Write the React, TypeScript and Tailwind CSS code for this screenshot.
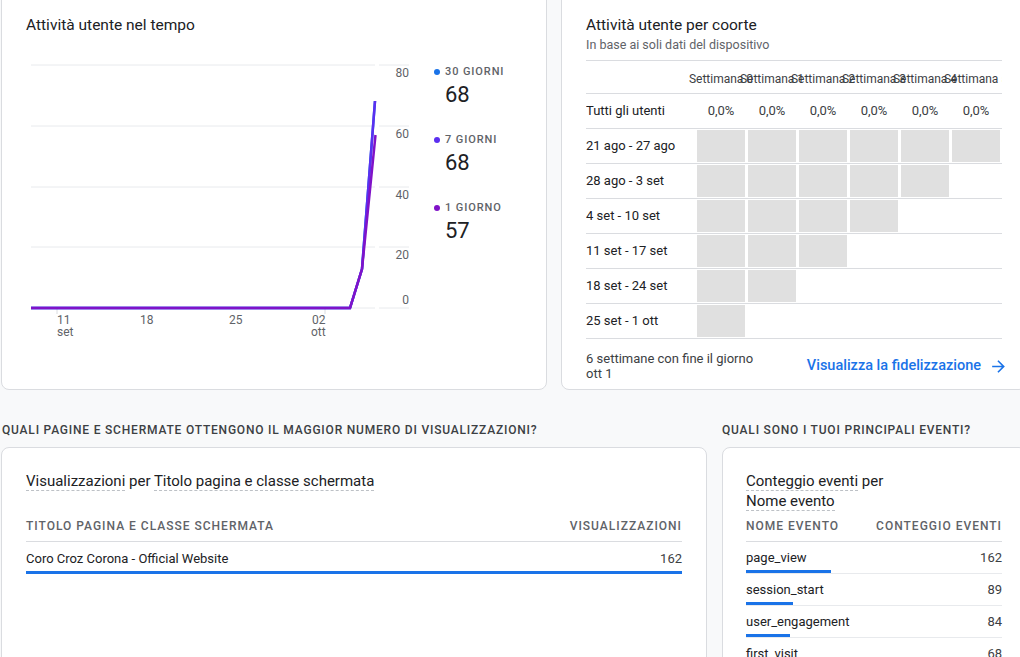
const cohortRows = [
  { label: "21 ago - 27 ago", cells: 6 },
  { label: "28 ago - 3 set", cells: 5 },
  { label: "4 set - 10 set", cells: 4 },
  { label: "11 set - 17 set", cells: 3 },
  { label: "18 set - 24 set", cells: 2 },
  { label: "25 set - 1 ott", cells: 1 },
]

const legend = [
  { label: "30 GIORNI", value: "68", color: "bg-[#1a73e8]" },
  { label: "7 GIORNI", value: "68", color: "bg-[#5b2ff0]" },
  { label: "1 GIORNO", value: "57", color: "bg-[#8012c8]" },
]

const events = [
  { name: "page_view", count: 162 },
  { name: "session_start", count: 89 },
  { name: "user_engagement", count: 84 },
  { name: "first_visit", count: 68 },
]

function ActivityChart() {
  const grid = [10, 71, 132, 192, 253]
  const yLabels = [
    { t: "80", y: 22 },
    { t: "60", y: 83 },
    { t: "40", y: 144 },
    { t: "20", y: 204 },
    { t: "0", y: 249 },
  ]
  return (
    <svg width="408" height="290" className="shrink-0">
      {grid.map((y) => (
        <g key={y}>
          <line x1="5" x2="349" y1={y} y2={y} stroke="#e8eaed" strokeWidth="1" />
          <line x1="353" x2="383" y1={y} y2={y} stroke="#e8eaed" strokeWidth="1" />
        </g>
      ))}
      {yLabels.map((l) => (
        <text key={l.t} x="383" y={l.y} textAnchor="end" fontSize="12" fill="#5f6368" fontFamily="Roboto, sans-serif">
          {l.t}
        </text>
      ))}
      {/* tick marks */}
      <line x1="31" x2="31" y1="253" y2="259" stroke="#dadce0" />
      <line x1="299" x2="299" y1="253" y2="259" stroke="#dadce0" />
      <g fontSize="12" fill="#5f6368" fontFamily="Roboto, sans-serif">
        <text x="31" y="269">11</text>
        <text x="31" y="281">set</text>
        <text x="114" y="269">18</text>
        <text x="203" y="269">25</text>
        <text x="286" y="269">02</text>
        <text x="285" y="281">ott</text>
      </g>
      <polyline points="5,253 324,253 336,214 349,46" fill="none" stroke="#1a73e8" strokeWidth="2.5" />
      <polyline points="5,253 324,253 336,214 349,46" fill="none" stroke="#5b2ff0" strokeWidth="2.5" />
      <polyline points="5,253 324,253 336,214 349.5,80" fill="none" stroke="#8012c8" strokeWidth="2.5" />
    </svg>
  )
}

function Dashed({ children }: { children: React.ReactNode }) {
  return <span className="border-b border-dashed border-[#bdc1c6]">{children}</span>
}

export default function App() {
  const max = 162

  return (
    <div className="w-[1020px] h-[657px] overflow-hidden bg-[#f8f9fa] font-['Roboto',sans-serif] text-[#202124]">
      <div className="w-[1027px] pl-[1px]">
        {/* Riga superiore — due card */}
        <div className="flex gap-[14px] -mt-[10px]">
          {/* Attività nel tempo */}
          <div className="w-[546px] h-[400px] shrink-0 rounded-lg border border-[#dadce0] bg-white px-6 pt-6">
            <h3 className="text-[15.5px] leading-5 text-[#202124]">Attività utente nel tempo</h3>
            <div className="mt-5 flex">
              <ActivityChart />
              <div className="flex flex-col gap-[24px] pt-[10px]">
                {legend.map((l) => (
                  <div key={l.label}>
                    <div className="flex h-[14px] items-center gap-[5px]">
                      <div className={`h-[6px] w-[6px] rounded-full ${l.color}`} />
                      <span className="text-[11px] font-medium tracking-[0.9px] text-[#5f6368]">{l.label}</span>
                    </div>
                    <div className="mt-[2px] pl-[11px] text-[22px] leading-[28px] text-[#202124]">{l.value}</div>
                  </div>
                ))}
              </div>
            </div>
          </div>

          {/* Attività per coorte */}
          <div className="w-[466px] h-[400px] shrink-0 rounded-lg border border-[#dadce0] bg-white px-6 pt-6">
            <h3 className="text-[15.5px] leading-5 text-[#202124]">Attività utente per coorte</h3>
            <p className="mt-[3px] text-[12.5px] leading-[14px] text-[#5f6368]">In base ai soli dati del dispositivo</p>

            <div className="mt-[8px] w-[416px] overflow-hidden">
              <div className="grid h-[34px] grid-cols-[108px_repeat(6,48px)] gap-x-[3px] border-y border-[#dadce0] pt-[4px] items-center">
                <div />
                {[0, 1, 2, 3, 4, 5].map((n) => (
                  <div key={n} className="flex justify-center">
                    <span className="whitespace-nowrap text-[12px] text-[#3c4043]">Settimana {n}</span>
                  </div>
                ))}
              </div>
              <div className="grid h-[35px] grid-cols-[108px_repeat(6,48px)] gap-x-[3px] border-b border-[#dadce0] items-center">
                <div className="text-[13px] text-[#202124]">Tutti gli utenti</div>
                {[0, 1, 2, 3, 4, 5].map((n) => (
                  <div key={n} className="text-center text-[13px] text-[#3c4043]">0,0%</div>
                ))}
              </div>
              {cohortRows.map((r) => (
                <div key={r.label} className="grid h-[35px] grid-cols-[108px_repeat(6,48px)] gap-x-[3px] border-b border-[#dadce0] items-center">
                  <div className="text-[13px] text-[#202124]">{r.label}</div>
                  {[0, 1, 2, 3, 4, 5].map((n) => (
                    <div key={n} className={`h-[32px] ${n < r.cells ? "bg-[#e0e0e0]" : ""}`} />
                  ))}
                </div>
              ))}
            </div>

            <div className="mt-[12px] flex items-center justify-between -mr-[6px]">
              <p className="w-[175px] text-[13px] leading-[15px] text-[#3c4043]">6 settimane con fine il giorno ott 1</p>
              <div className="flex items-center gap-[8px] text-[14.5px] font-medium text-[#1a73e8]">
                <span>Visualizza la fidelizzazione</span>
                <svg viewBox="0 0 24 24" className="h-[19px] w-[19px] fill-[#1a73e8]">
                  <path d="M12 4l-1.41 1.41L16.17 11H4v2h12.17l-5.58 5.59L12 20l8-8z" />
                </svg>
              </div>
            </div>
          </div>
        </div>

        {/* Riga inferiore */}
        <div className="flex gap-[15px]">
          {/* Pagine e schermate */}
          <div className="w-[706px] shrink-0">
            <h4 className="pt-[32px] mb-[9px] pl-[1px] text-[12px] leading-4 font-medium tracking-[0.8px] text-[#3c4043]">
              QUALI PAGINE E SCHERMATE OTTENGONO IL MAGGIOR NUMERO DI VISUALIZZAZIONI?
            </h4>
            <div className="h-[240px] rounded-lg border border-[#dadce0] bg-white px-6 pt-[23px]">
              <div className="h-[40px] text-[15px] leading-5 text-[#202124]">
                <Dashed>Visualizzazioni</Dashed> per <Dashed>Titolo pagina e classe schermata</Dashed>
              </div>
              <div className="flex h-[31px] items-center justify-between border-b border-[#dadce0] text-[12px] font-medium tracking-[1px] text-[#5f6368]">
                <span>TITOLO PAGINA E CLASSE SCHERMATA</span>
                <span>VISUALIZZAZIONI</span>
              </div>
              <div className="flex h-[32px] flex-col">
                <div className="flex flex-1 items-center justify-between pt-[4px] text-[13px] text-[#202124]">
                  <span>Coro Croz Corona - Official Website</span>
                  <span className="text-[#3c4043]">162</span>
                </div>
                <div className="h-[3px] w-full bg-[#1a73e8]" />
              </div>
            </div>
          </div>

          {/* Eventi */}
          <div className="w-[305px] shrink-0">
            <h4 className="pt-[32px] mb-[9px] text-[12px] leading-4 font-medium tracking-[0.8px] text-[#3c4043]">
              QUALI SONO I TUOI PRINCIPALI EVENTI?
            </h4>
            <div className="h-[240px] rounded-lg border border-[#dadce0] bg-white pl-[23px] pr-6 pt-[23px]">
              <div className="h-[40px] text-[15px] leading-5 text-[#202124]">
                <Dashed>Conteggio eventi</Dashed> per
                <br />
                <Dashed>Nome evento</Dashed>
              </div>
              <div className="flex h-[31px] items-center justify-between border-b border-[#dadce0] text-[12px] font-medium tracking-[1px] text-[#5f6368]">
                <span>NOME EVENTO</span>
                <span>CONTEGGIO EVENTI</span>
              </div>
              {events.map((e) => (
                <div key={e.name} className="flex h-[32px] flex-col border-b border-[#e8eaed]">
                  <div className="flex flex-1 items-center justify-between pt-[4px] text-[13px] text-[#202124]">
                    <span>{e.name}</span>
                    <span className="text-[#3c4043]">{e.count}</span>
                  </div>
                  <div className="h-[3px] bg-[#1a73e8]" style={{ width: `${(e.count / max) * 85}px` }} />
                </div>
              ))}
            </div>
          </div>
        </div>
      </div>
    </div>
  )
}
